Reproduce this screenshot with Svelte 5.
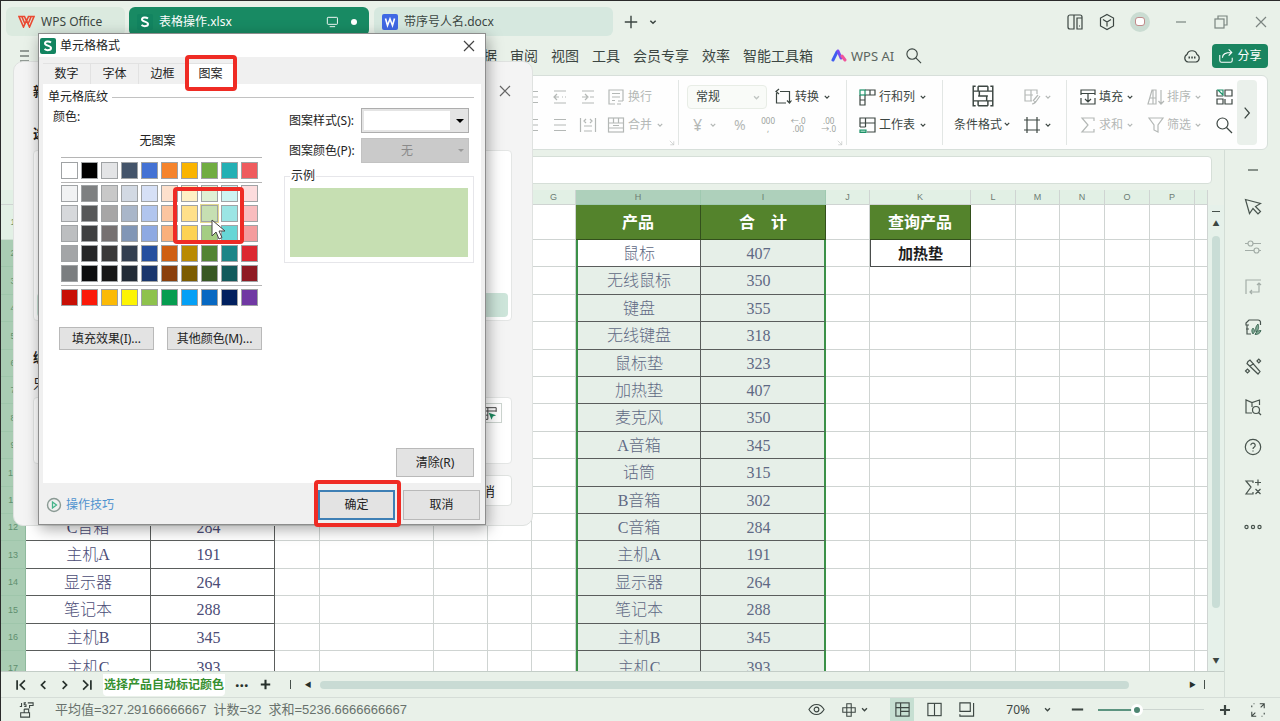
<script lang="ts">
	type Product = { name: string; total: number };

	const products: Product[] = [
		{ name: '鼠标', total: 407 },
		{ name: '无线鼠标', total: 350 },
		{ name: '键盘', total: 355 },
		{ name: '无线键盘', total: 318 },
		{ name: '鼠标垫', total: 323 },
		{ name: '加热垫', total: 407 },
		{ name: '麦克风', total: 350 },
		{ name: 'A音箱', total: 345 },
		{ name: '话筒', total: 315 },
		{ name: 'B音箱', total: 302 },
		{ name: 'C音箱', total: 284 },
		{ name: '主机A', total: 191 },
		{ name: '显示器', total: 264 },
		{ name: '笔记本', total: 288 },
		{ name: '主机B', total: 345 },
		{ name: '主机C', total: 393 }
	];

	const columns = 'ABCDEFGHIJKLMNOP'.split('');
	const columnWidths = [125, 124, 45, 114, 54, 44, 44, 125, 125, 44, 101, 45, 44, 45, 45, 45];

	const menus = ['文件', '开始', '插入', '页面', '公式', '数据', '审阅', '视图', '工具', '会员专享', '效率', '智能工具箱'];
	const dialogTabs = ['数字', '字体', '边框', '图案'];

	const themeColors = ['#ffffff', '#000000', '#e3e4e6', '#44546a', '#4472d4', '#f5842c', '#fab400', '#70ad41', '#23b0b4', '#ef5b5e'];
	const shades = [
		['#f1f2f3', '#7e8081', '#c8c8c8', '#d2d9e3', '#d6e0f6', '#fde0cc', '#fff0c4', '#dff0d4', '#cdf3f2', '#fcdcdd'],
		['#d6d8db', '#575859', '#a7a6a6', '#a9b6c9', '#b1c5ee', '#fbc5a0', '#ffe08a', '#c6dfb2', '#9be5e4', '#f9bcbe'],
		['#bcbec0', '#3f4041', '#767171', '#8196b6', '#8ea9e2', '#f9b07c', '#fdd253', '#a4cd83', '#67d6d6', '#f49c9d'],
		['#a3a5a7', '#252627', '#3a3939', '#333f50', '#254f9f', '#cf5f12', '#b98a00', '#528433', '#1b8587', '#dc2831'],
		['#7b7e80', '#0c0d0e', '#171717', '#222b36', '#1a366c', '#8a400d', '#7c5c00', '#385823', '#125a5b', '#8f1b23']
	];
	const standardColors = ['#c81006', '#fb1a0a', '#fbba06', '#fdf403', '#8ec24c', '#069d50', '#04a0f6', '#0768c2', '#01205f', '#7039a3'];

	const icons: Record<string, string> = {
		menu: '<path d="M4 4h9M4 9h9M4 14h9"/>',
		monitor: '<rect x="3" y="3" width="13" height="9" rx="1"/><path d="M6 15h7"/>',
		plus: '<path d="M9 2v14M2 9h14" stroke-width="1.600"/>',
		bigplus: '<path d="M9 4v10M4 9h10" stroke-width="2.2"/>',
		bigminus: '<path d="M3 9h12" stroke-width="2.2"/>',
		close: '<path d="M4 4l10 10M14 4L4 14"/>',
		split: '<path d="M8 2H4a2 2 0 0 0-2 2v10a2 2 0 0 0 2 2h4zM8 2h6a2 2 0 0 1 2 2v12h-5V5h5M13 13h1"/>',
		cube: '<path d="M9 1.500l6.500 3.500v8L9 16.500 2.500 13V5zM5 6.500L9 9l4-2.500M9 9v4.500"/>',
		minimize: '<path d="M4 9h10"/>',
		restore: '<rect x="3" y="6" width="9" height="9"/><path d="M6 6V3h9v9h-3"/>',
		search: '<circle cx="7.500" cy="7.500" r="5.500"/><path d="M11.500 11.500L17 17"/>',
		cloud: '<path d="M5 15a4 4 0 0 1-1-7.500 5.200 5.200 0 0 1 10 0A4 4 0 0 1 13 15z"/><path d="M5.500 10.500h1.500M8.300 10.500h1.500M11 10.500h1.500" stroke-width="1.800"/>',
		share: '<path d="M2 8v6a2 2 0 0 0 2 2h10a2 2 0 0 0 2-2v-3M5 11c0-4 3-6 10-6M12 1.500L15.500 5 12 8.500"/>',
		outdent: '<path d="M3 3h12M3 15h12M3 9h5M11 9h1M14 9h1M6 6L3 9l3 3"/>',
		indent: '<path d="M3 3h12M3 15h12M3 9h5M11 9h4M6 6l3 3-3 3"/>',
		lines: '<path d="M3 3.500h12M3 9h12M3 14.500h12"/>',
		distribute: '<path d="M1.500 2v14M16.500 2v14M5 10h8M5 15h8M7 3L5 5l2 2M11 3l2 2-2 2"/>',
		wrap: '<path d="M16 13V2H2v14h6M5 5.500h8M5 9h8M5 12.500h3M16 13h-5M10 16h4"/>',
		merge: '<rect x="1.500" y="2" width="15" height="14"/><path d="M1.500 7h15M6.500 2v5M11.500 2v5M1.500 12h15M6 9.500h6"/>',
		convert: '<path d="M6 3.500h9.500v11M12 15H2.500V3.500M5 1L2 3.500 5 6M13 12.500l2.500 2.500 2-2.500"/>',
		rowcol: '<path d="M2 7v10h5V7M2 12h5M7 2h10v5H7M12 2v5"/><rect x="2" y="2" width="5" height="5" stroke="#1c9068"/>',
		worksheet: '<path d="M2 11V2h15v14H9M2 7h15M7.500 2v9M2 11h5.500"/><path d="M2 14h6v2.500H2z" stroke="#1c9068" fill="#8fd0b5"/>',
		condition: '<path d="M3 1H1v16h2M15 1h2v16h-2M1 5h16M1 13h16M5 9h8M5 1h8M5 17h8M5 1v4M13 1v4M6 5v4M12 9v4M5 13v4M13 13v4"/>',
		brush: '<path d="M9 13H2V2h12v4M2 7h8M8 2v11M10 13l5-6M12 15l5-7M9 16c2 0 3-1 3-3"/>',
		frame: '<path d="M4 1v16M14 1v16M1 4h16M1 14h16"/>',
		fill: '<path d="M2 7V2h14v5M2 10v6h14v-6M2 5.500h14M9 6v8M6 11l3 3 3-3"/>',
		sort: '<path d="M1 16l4-14h4v14zM3 10h6M6 2v14M14 2v14M11.500 13l2.500 3 3-3"/>',
		sigma: '<path d="M15 5V2H3l6 7-6 7h12v-3"/>',
		filter: '<path d="M2 2h14l-5 7v7l-4-2V9z"/>',
		freeze: '<path d="M8 8H2V2M10 2h7v6h-7zM8 11H2v5h6zM10 11v5h7v-5"/><path d="M3 2l5 5V2z" stroke="#1c9068"/>',
		cursor: '<path d="M1.500 1.500l4 14 3.500-5 5 5.500 2.500-2.500-5-5 5-3z"/>',
		sliders: '<path d="M1 5.500h3M9 5.500h8M1 12.500h9M15 12.500h2"/><circle cx="6.500" cy="5.500" r="2.500"/><circle cx="12.500" cy="12.500" r="2.500"/>',
		crop: '<path d="M2 16V2h15M6 14h9V5M13 7l2-2 2 2M8 12l-2 2 2 2"/>',
		plant: '<path d="M16.500 7V5a2.500 2.500 0 0 0-2.500-3H5L2 5v2h3M3 7v9h4M2 11h3"/><path d="M9 16c-2-3-1-5 0-6 2 2 2 4 0 6zM12 14c-1-4 0-6 2-8 1 3 1 6-2 8zM11 16.500c1-3 3-4 6-4-1 3-3 4-6 4z" fill="#7fa893" stroke="#2e5c48" stroke-width=".8"/>',
		wand: '<path d="M4 3.500l2-1.500L16 13.500l-2 2.500L3 5.500zM6 8l4-2.500M13 3l1.800-1.800L16.600 3l-1.800 1.800zM1.500 13l2-2 2 2-2 2z"/>',
		book: '<path d="M8 15H2V2l6 2.500L15.500 2v5M8 4.500V9"/><circle cx="12" cy="12" r="3.500"/><path d="M14.500 14.500L17 17"/>',
		help: '<circle cx="9" cy="9" r="7.700"/><path d="M6.800 7.300a2.200 2.200 0 1 1 3.500 1.800C9.300 9.700 9 10 9 11M9 12.500v1"/>',
		formula: '<path d="M9 5V3H2l5 6-5 7h7v-2M14 1.500v6M11 4.500h6M11.500 11l5 5M16.500 11l-5 5"/>',
		more: '<circle cx="2.500" cy="9" r="1.600"/><circle cx="9" cy="9" r="1.600"/><circle cx="15.500" cy="9" r="1.600"/>',
		first: '<path d="M4 3v12M14 3L8 9l6 6" stroke-width="2.200"/>',
		prev: '<path d="M12 4L7 9l5 5" stroke-width="2.200"/>',
		next: '<path d="M6 4l5 5-5 5" stroke-width="2.200"/>',
		last: '<path d="M14 3v12M4 3l6 6-6 6" stroke-width="2.200"/>',
		script: '<path d="M4 1v4H2M9 1H7v2h2v2H7M11 1h6v3h-4v3M7 8v4M3 12h10v5H3zM7 8h5v4"/>',
		eye: '<path d="M1 9c4-7 12-7 16 0-4 7-12 7-16 0z"/><circle cx="9" cy="9" r="2.500"/>',
		cross: '<path d="M6.500 2h5v14h-5zM2 6.500h14v5H2z"/>',
		normal: '<rect x="2" y="2" width="14" height="14"/><path d="M2 7h14M7 2v14M7 11h9"/>',
		page: '<rect x="2" y="2.500" width="14" height="13"/><path d="M9 2.500v13"/>',
		layout: '<path d="M16.500 2v14H2v-2M2 2h11v9H2zM2 16h14"/>',
		full: '<path d="M11 2h5v5M16 2l-4 4M7 16H2v-5M2 16l4-4M2 6V4M5 2H4M16 12v2M13 16h1"/>',
		down: '<path d="M5 7l4 4 4-4" stroke-width="2.200"/>',
		right: '<path d="M6 2l6 7-6 7" stroke-width="1.600"/>',
		pick: '<path d="M17 7V2H2v14h5M2 6h15M7 2v14M2 11h5"/><path d="M8 8l9 3-4 1.500-1.500 4z" fill="#1c8a60" stroke="none"/>',
		corner: '<path d="M4 4l9 9M13 5v8H5"/>'
	};

	const sideTools = ['minimize', 'cursor', 'sliders', 'crop', 'plant', 'wand', 'book', 'help', 'formula', 'more'];
	const fadedTools = ['sliders', 'crop'];

	let activeTab = $state('图案');
	let picked = $state('#c6dfb2');
	let zoom = $state(35);
</script>

{#snippet icon(name: string, size = 16)}
	<svg class="icon" width={size} height={size} viewBox="0 0 18 18" aria-hidden="true">{@html icons[name]}</svg>
{/snippet}

{#snippet swatches(colors: string[])}
	<div class="swatches">
		{#each colors as color}
			<button class="swatch" class:picked={color === picked} style:background={color} aria-label={color} onclick={() => (picked = color)}></button>
		{/each}
	</div>
{/snippet}

{#snippet sheetLogo()}
	<svg width="16" height="16" viewBox="0 0 16 16" aria-hidden="true">
		<rect width="16" height="16" rx="2" fill="#128460" />
		<path d="M11 4.500C9 3 5 3.200 5 5.500s6 2 6 4.500-4 2.800-6.500 1" fill="none" stroke="#fff" stroke-width="2" />
	</svg>
{/snippet}

<div class="app">
	<header class="titlebar">
		<button class="file-tab home">
			<svg width="17" height="13" viewBox="0 0 17 13" aria-hidden="true">
				<path d="M1 1.500h5.500L8.500 6l2-4.500H16L11.500 12 8.500 5.500 5.500 12z M4 2l3 7M13 2l-3 7" fill="none" stroke="#ea4a32" stroke-width="1.600" />
			</svg>
			WPS Office
		</button>
		<button class="file-tab current">
			{@render sheetLogo()}
			<span class="file-name">表格操作.xlsx</span>
			{@render icon('monitor', 14)}
			<span class="unsaved"></span>
		</button>
		<button class="file-tab doc">
			<svg width="16" height="16" viewBox="0 0 16 16" aria-hidden="true">
				<rect width="16" height="16" rx="2" fill="#3f68e4" />
				<path d="M3.500 4.500L5.500 11.500 8 5l2.500 6.500 2-7" fill="none" stroke="#fff" stroke-width="1.600" />
			</svg>
			<span>带序号人名.docx</span>
		</button>
		<button class="plain add" aria-label="新建标签">{@render icon('plus', 16)}</button>
		<button class="plain" aria-label="标签列表">{@render icon('down', 12)}</button>
		<div class="window-tools">
			<button class="plain" aria-label="分屏">{@render icon('split', 18)}</button>
			<button class="plain" aria-label="应用">{@render icon('cube', 18)}</button>
			<span class="avatar"><span></span></span>
			<button class="plain thin" aria-label="最小化">{@render icon('minimize', 18)}</button>
			<button class="plain thin" aria-label="还原">{@render icon('restore', 18)}</button>
			<button class="plain thin" aria-label="关闭">{@render icon('close', 18)}</button>
		</div>
	</header>

	<nav class="menubar">
		<button class="plain" aria-label="菜单">{@render icon('menu', 18)}</button>
		<div class="menus">
			{#each menus as menu}
				<button class="plain">{menu}</button>
			{/each}
		</div>
		<button class="plain ai">
			<svg width="16" height="14" viewBox="0 0 16 14" aria-hidden="true">
				<path d="M2 11L6 3" stroke="#3f5df0" stroke-width="3" stroke-linecap="round" />
				<path d="M7 2l3 7" stroke="#7a4cf0" stroke-width="3" stroke-linecap="round" />
				<path d="M11 7l3 4" stroke="#f0569c" stroke-width="3" stroke-linecap="round" />
			</svg>
			WPS AI
		</button>
		<button class="plain" aria-label="搜索">{@render icon('search', 17)}</button>
		<div class="menu-right">
			<button class="plain" aria-label="云文档">{@render icon('cloud', 18)}</button>
			<button class="share">{@render icon('share', 16)}分享</button>
		</div>
	</nav>

	<section class="ribbon">
		<div class="group align faded">
			<div class="tools">
				{@render icon('lines', 18)}{@render icon('outdent', 18)}{@render icon('indent', 18)}
				<button class="plain wide">{@render icon('wrap', 18)}换行</button>
			</div>
			<div class="tools">
				{@render icon('lines', 18)}{@render icon('lines', 18)}{@render icon('distribute', 18)}
				<button class="plain wide">{@render icon('merge', 18)}合并{@render icon('down', 10)}</button>
			</div>
			<span class="launcher">{@render icon('corner', 8)}</span>
		</div>
		<div class="group number">
			<div class="tools">
				<select class="format" aria-label="数字格式"><option>常规</option></select>
				<span class="format-arrow">{@render icon('down', 11)}</span>
				<button class="plain">{@render icon('convert', 18)}转换{@render icon('down', 10)}</button>
			</div>
			<div class="tools faded signs">
				<button class="plain yen">¥{@render icon('down', 10)}</button>
				<button class="plain">%</button>
				<button class="plain tiny">000<br />,</button>
				<button class="plain tiny">←.0<br />.00</button>
				<button class="plain tiny">.00<br />→.0</button>
			</div>
			<span class="launcher">{@render icon('corner', 8)}</span>
		</div>
		<div class="group sheet-group">
			<div class="tools"><button class="plain">{@render icon('rowcol', 18)}行和列{@render icon('down', 10)}</button></div>
			<div class="tools"><button class="plain">{@render icon('worksheet', 18)}工作表{@render icon('down', 10)}</button></div>
		</div>
		<div class="group format-group">
			<button class="plain stacked">
				{@render icon('condition', 22)}
				<span>条件格式{@render icon('down', 10)}</span>
			</button>
			<div class="pair">
				<div class="tools faded"><button class="plain">{@render icon('brush', 18)}{@render icon('down', 10)}</button></div>
				<div class="tools"><button class="plain">{@render icon('frame', 18)}{@render icon('down', 10)}</button></div>
			</div>
		</div>
		<div class="group edit">
			<div class="tools">
				<button class="plain">{@render icon('fill', 18)}填充{@render icon('down', 10)}</button>
				<button class="plain faded">{@render icon('sort', 18)}排序{@render icon('down', 10)}</button>
				<button class="plain" aria-label="冻结">{@render icon('freeze', 18)}</button>
			</div>
			<div class="tools">
				<button class="plain faded">{@render icon('sigma', 18)}求和{@render icon('down', 10)}</button>
				<button class="plain faded">{@render icon('filter', 18)}筛选{@render icon('down', 10)}</button>
				<button class="plain" aria-label="查找">{@render icon('search', 18)}</button>
			</div>
		</div>
		<button class="plain expand" aria-label="更多">{@render icon('right', 14)}</button>
	</section>

	<div class="workspace">
		<main class="book">
			<input class="formula-bar" aria-label="编辑栏" />
			<div class="grid-row">
				<div class="grid">
					<table>
						<colgroup>
							<col style:width="25px" />
							{#each columnWidths as width}
								<col style:width="{width}px" />
							{/each}
							<col />
						</colgroup>
						<thead>
							<tr>
								<th></th>
								{#each columns as letter}
									<th class:selected={letter === 'H' || letter === 'I'}>{letter}</th>
								{/each}
								<th></th>
							</tr>
						</thead>
						<tbody>
							<tr class="titles">
								<th>1</th>
								<td class="title">产品</td>
								<td class="title">合&emsp;计</td>
								{#each 'CDEFG' as _}<td></td>{/each}
								<td class="title">产品</td>
								<td class="title">合&emsp;计</td>
								<td></td>
								<td class="title">查询产品</td>
								{#each 'LMNOP ' as _}<td></td>{/each}
							</tr>
							{#each products as product, i}
								<tr>
									<th>{i + 2}</th>
									<td class="data">{product.name}</td>
									<td class="data amount">{product.total}</td>
									{#each 'CDEFG' as _}<td></td>{/each}
									<td class="data name" class:tinted={i > 0}>{product.name}</td>
									<td class="data amount total tinted">{product.total}</td>
									<td></td>
									<td class:query={i === 0}>{i === 0 ? '加热垫' : ''}</td>
									{#each 'LMNOP ' as _}<td></td>{/each}
								</tr>
							{/each}
						</tbody>
					</table>
				</div>
				<div class="vscroll">
					<span class="dash"></span>
					<span class="arrow">▲</span>
					<span class="thumb"></span>
					<span class="arrow bottom">▼</span>
				</div>
			</div>
			<div class="sheet-tabs">
				{#each ['first', 'prev', 'next', 'last'] as step}
					<button class="plain" aria-label={step}>{@render icon(step, 14)}</button>
				{/each}
				<button class="sheet-tab">选择产品自动标记颜色</button>
				<button class="plain dots">···</button>
				<button class="plain" aria-label="新建工作表">{@render icon('bigplus', 17)}</button>
				<span class="bar"></span>
				<span class="arrow">◀</span>
				<div class="hscroll"><span></span></div>
				<span class="arrow">▶</span>
				<span class="bar"></span>
			</div>
		</main>
		<aside class="side">
			{#each sideTools as tool}
				<button class="plain" class:pale={fadedTools.includes(tool)} aria-label={tool}>{@render icon(tool, 18)}</button>
			{/each}
		</aside>
	</div>

	<footer class="status">
		{@render icon('script', 16)}
		<div class="summary">
			<span>平均值=327.29166666667</span>
			<span>计数=32</span>
			<span>求和=5236.6666666667</span>
		</div>
		<div class="views">
			<button class="plain" aria-label="护眼模式">{@render icon('eye', 17)}</button>
			<button class="plain reading" aria-label="阅读模式">{@render icon('cross', 16)}{@render icon('down', 11)}</button>
			<button class="plain view active" aria-label="普通视图">{@render icon('normal', 17)}</button>
			<button class="plain view" aria-label="分页预览">{@render icon('page', 17)}</button>
			<button class="plain view" aria-label="页面布局">{@render icon('layout', 17)}</button>
			<button class="plain percent">70%{@render icon('down', 11)}</button>
			<button class="plain" aria-label="缩小">{@render icon('bigminus', 17)}</button>
			<input class="zoom" type="range" min="0" max="100" bind:value={zoom} aria-label="缩放" />
			<button class="plain" aria-label="放大">{@render icon('bigplus', 18)}</button>
			<button class="plain" aria-label="全屏">{@render icon('full', 16)}</button>
		</div>
	</footer>

	<section class="rule-window">
		<div class="rule-title">
			<strong>新建格式规则</strong>
			<button class="plain" aria-label="关闭">{@render icon('close', 18)}</button>
		</div>
		<strong class="rule-label">选择规则类型(S):</strong>
		<div class="rule-types"><span></span></div>
		<strong class="rule-label second">编辑规则说明(E):</strong>
		<span class="rule-text">只为满足以下条件的单元格设置格式</span>
		<div class="rule-formula"><button class="picker" aria-label="选取区域">{@render icon('pick', 15)}</button></div>
		<button class="rule-cancel">取消</button>
	</section>

	<section class="dialog">
		<div class="dialog-title">
			{@render sheetLogo()}
			<span>单元格格式</span>
			<button class="plain" aria-label="关闭">{@render icon('close', 18)}</button>
		</div>
		<div class="dialog-tabs">
			{#each dialogTabs as tab}
				<button class="dialog-tab" class:active={tab === activeTab} onclick={() => (activeTab = tab)}>{tab}</button>
			{/each}
		</div>
		<div class="dialog-page">
			<div class="legend"><span>单元格底纹</span></div>
			<div class="halves">
				<div class="palette">
					<span class="caption">颜色:</span>
					<button class="plain none">无图案</button>
					<div class="palette-grid">
						{@render swatches(themeColors)}
						<div class="shades">
							{#each shades as row}
								{@render swatches(row)}
							{/each}
							<span class="mark"></span>
							<svg class="pointer" width="15" height="21" viewBox="0 0 15 21" aria-hidden="true">
								<path d="M1 1v16l4-4 3 7 3-1.500-3-6.500h6z" fill="#fff" stroke="#444" />
							</svg>
						</div>
						{@render swatches(standardColors)}
					</div>
					<div class="palette-buttons">
						<button class="push">填充效果(I)...</button>
						<button class="push">其他颜色(M)...</button>
					</div>
				</div>
				<div class="pattern">
					<div class="field">
						<label for="style">图案样式(S):</label>
						<div class="combo">
							<select id="style"><option></option></select>
							<svg width="8" height="4" viewBox="0 0 8 4" aria-hidden="true"><path d="M0 0h8L4 4z" /></svg>
						</div>
					</div>
					<div class="field">
						<label for="color">图案颜色(P):</label>
						<div class="combo disabled">
							<select id="color" disabled><option>无</option></select>
							<svg width="6" height="3" viewBox="0 0 8 4" aria-hidden="true"><path d="M0 0h8L4 4z" /></svg>
						</div>
					</div>
					<fieldset>
						<legend>示例</legend>
						<div class="sample" style:background={picked}></div>
					</fieldset>
				</div>
			</div>
			<button class="push clear">清除(R)</button>
		</div>
		<div class="dialog-footer">
			<a href="#tips">
				<svg width="16" height="16" viewBox="0 0 16 16" aria-hidden="true">
					<circle cx="8" cy="8" r="6.500" fill="none" stroke="#8a9a94" stroke-width="1.400" />
					<path d="M6.500 5v6l4-3z" fill="none" stroke="#46b48b" stroke-width="1.300" />
				</svg>
				操作技巧
			</a>
			<button class="push ok">确定</button>
			<button class="push">取消</button>
		</div>
	</section>
</div>

<style>
	:global(body) {
		margin: 0;
	}

	.app {
		position: relative;
		display: flex;
		flex-direction: column;
		height: 100vh;
		box-sizing: border-box;
		overflow: hidden;
		border-top: 1px solid #2a2a2a;
		border-left: 1px solid #2a2a2a;
		background: #e9f1e9;
		color: #3c4642;
		font-family: 'Noto Sans', 'Noto Sans CJK SC', sans-serif;
		font-size: 12px;
		line-height: 16px;
	}

	.app * {
		box-sizing: border-box;
	}

	button,
	select,
	input {
		margin: 0;
		font: inherit;
		color: inherit;
	}

	.plain {
		display: inline-flex;
		align-items: center;
		gap: 2px;
		padding: 0;
		border: none;
		background: none;
		white-space: nowrap;
	}

	.icon {
		flex: none;
		fill: none;
		stroke: currentColor;
		stroke-width: 1.2;
	}

	.faded {
		color: #b4b8b6;
	}

	/* title bar */
	.titlebar {
		display: flex;
		align-items: center;
		height: 35px;
		padding: 6px 10px 0 5px;
	}

	.file-tab {
		display: flex;
		align-items: center;
		gap: 6px;
		height: 29px;
		padding: 0 12px;
		border: none;
		border-radius: 6px;
		background: #dbeadf;
	}

	.home {
		width: 119px;
		margin-right: 4px;
	}

	.current {
		width: 240px;
		margin-right: 5px;
		padding: 0 12px 0 8px;
		background: #188a63;
		color: #fff;
	}

	.file-name {
		flex: 1;
		text-align: left;
	}

	.unsaved {
		width: 6px;
		height: 6px;
		margin: 0 0 0 6px;
		border-radius: 50%;
		background: #fff;
	}

	.doc {
		width: 239px;
		padding: 0 8px;
		background: #d6e8df;
	}

	.add {
		margin: 0 8px 0 10px;
	}

	.window-tools {
		display: flex;
		align-items: center;
		gap: 14px;
		margin-left: auto;
	}

	.avatar {
		display: flex;
		align-items: center;
		justify-content: center;
		width: 20px;
		height: 20px;
		border-radius: 50%;
		background: #cadcd2;
	}

	.avatar span {
		width: 10px;
		height: 9px;
		border: 1px solid #c08b8b;
		border-radius: 3px;
		background: #fff;
	}

	.thin {
		margin-left: 8px;
		color: #7b8580;
	}

	/* menus */
	.menubar {
		display: flex;
		align-items: center;
		height: 39px;
		padding: 0 12px 0 15px;
		font-size: 14px;
	}

	.menus {
		display: flex;
		gap: 13px;
		margin-left: 230px;
	}

	.ai {
		gap: 4px;
		margin: 0 11px 0 18px;
		color: #5b6560;
		font-size: 13px;
	}

	.menu-right {
		display: flex;
		gap: 11px;
		margin-left: auto;
	}

	.share {
		display: flex;
		align-items: center;
		justify-content: center;
		gap: 3px;
		width: 56px;
		height: 24px;
		padding: 0;
		border: none;
		border-radius: 4px;
		background: #1a8560;
		color: #fff;
		font-size: 12px;
	}

	/* ribbon */
	.ribbon {
		display: flex;
		align-items: stretch;
		height: 75px;
		margin: 0 12px 0 13px;
		padding: 4px 10px 4px 0;
		border: 1px solid #d7dfda;
		border-radius: 6px;
		background: #fefefe;
	}

	.group {
		position: relative;
		display: flex;
		flex: none;
		flex-direction: column;
		gap: 4px;
		padding-top: 5px;
		border-right: 1px solid #e2e6e4;
	}

	.tools {
		display: flex;
		align-items: center;
		height: 24px;
	}

	.launcher {
		position: absolute;
		right: 2px;
		bottom: -2px;
		line-height: 8px;
		color: #b4b8b6;
	}

	.align {
		width: 664px;
		align-items: flex-end;
	}

	.align .tools {
		gap: 10px;
	}

	.wide {
		width: 71px;
		gap: 3px;
	}

	.number {
		width: 168px;
		padding-left: 8px;
	}

	.format {
		width: 80px;
		height: 24px;
		padding: 0 8px;
		appearance: none;
		border: 1px solid #e8ede6;
		border-radius: 4px;
		background: #f9fbf8;
	}

	.format-arrow {
		margin: 0 12px 0 -16px;
		line-height: 8px;
		color: #c0c5c2;
		pointer-events: none;
	}

	.number .plain {
		gap: 3px;
	}

	.signs {
		justify-content: space-between;
		padding: 0 10px 0 6px;
		font-size: 14px;
	}

	.signs .yen {
		font-size: 16px;
		gap: 6px;
	}

	.tiny {
		color: #9a9f9c;
		font-size: 8px;
		line-height: 8px;
	}

	.sheet-group {
		width: 96px;
		padding-left: 11px;
	}

	.sheet-group .plain {
		gap: 3px;
	}

	.format-group {
		flex-direction: row;
		align-items: flex-start;
		width: 124px;
		gap: 11px;
		padding-left: 11px;
	}

	.stacked {
		flex-direction: column;
		gap: 10px;
	}

	.pair {
		display: flex;
		flex-direction: column;
		gap: 4px;
	}

	.edit {
		flex: 1;
		min-width: 0;
		padding-left: 12px;
		border: none;
	}

	.edit .tools {
		gap: 12px;
	}

	.expand {
		justify-content: center;
		width: 20px;
		border-radius: 4px;
		background: #eaf0eb;
	}

	/* workbook */
	.workspace {
		display: flex;
		flex: 1;
		min-height: 0;
	}

	.book {
		display: flex;
		flex: 1;
		flex-direction: column;
		min-width: 0;
		border-right: 1px solid #d3ddd6;
	}

	.formula-bar {
		flex: none;
		height: 28px;
		margin: 6px 12px 6px 13px;
		border: 1px solid #d6dfd8;
		border-radius: 4px;
		background: #fff;
	}

	.grid-row {
		display: flex;
		flex: 1;
		min-height: 0;
		border-bottom: 1px solid #c3cdc7;
	}

	.grid {
		flex: 1;
		min-width: 0;
		overflow: hidden;
	}

	table {
		width: 100%;
		table-layout: fixed;
		border-spacing: 0;
		background: #fff;
	}

	th,
	td {
		padding: 0;
		overflow: hidden;
		border-right: 1px solid #cfd4d2;
		border-bottom: 1px solid #cfd4d2;
		text-align: center;
		white-space: nowrap;
	}

	thead th {
		height: 15px;
		background: #e2f0e5;
		color: #6d7c74;
		font-family: 'Liberation Sans', sans-serif;
		font-size: 9px;
		font-weight: 400;
		line-height: 12px;
	}

	thead .selected {
		border-color: #9fc9b0;
		background: #aed0bb;
	}

	tbody tr {
		height: 27px;
	}

	tbody tr:nth-child(5n + 3),
	tbody tr:nth-child(5n + 5) {
		height: 28px;
	}

	tbody tr.titles {
		height: 35px;
	}

	tbody tr:last-child {
		height: 34px;
	}

	tbody th {
		border-right: 1px solid #8fb99d;
		border-bottom-color: #9fc6ab;
		background: #a9ccb3;
		color: #5f8f6f;
		font-family: 'Liberation Sans', sans-serif;
		font-size: 9px;
		font-weight: 400;
	}

	.titles th {
		border-color: #cfdfd3;
		background: #e2f0e5;
	}

	.title {
		border-color: #33501c;
		background: #54832c;
		color: #fff;
		font-size: 16px;
		font-weight: 700;
	}

	.data {
		padding-top: 1px;
		border-color: #5a5d5c;
		color: #4b4c76;
		font-family: 'Liberation Serif', 'Noto Sans CJK SC', serif;
		font-size: 16px;
		font-weight: 300;
	}

	.amount {
		padding-right: 8px;
	}

	.name {
		border-left: 2px solid #3b9148;
		color: #5f6984;
	}

	.total {
		border-right: 2px solid #3b9148;
		color: #5f6984;
	}

	.tinted {
		background: #e6efe8;
	}

	.query {
		border: 1px solid #4a4d4c;
		border-top: none;
		color: #1d1d1d;
		font-size: 15px;
		font-weight: 700;
	}

	.vscroll {
		display: flex;
		flex-direction: column;
		align-items: center;
		width: 16px;
		margin-top: 15px;
		padding: 6px 0;
		background: #e6f1ea;
	}

	.arrow {
		font-size: 7px;
		line-height: 8px;
	}

	.dash {
		width: 8px;
		height: 1px;
		margin-bottom: 8px;
		background: #46504b;
	}

	.thumb {
		width: 8px;
		height: 82%;
		margin-top: 8px;
		border-radius: 4px;
		background: #c9ddd6;
	}

	.bottom {
		margin-top: auto;
	}

	.sheet-tabs {
		display: flex;
		align-items: center;
		gap: 8px;
		height: 25px;
		padding: 0 19px 0 13px;
		color: #26302b;
	}

	.sheet-tab {
		height: 22px;
		margin: 0 2px 0 1px;
		padding: 0 1px;
		border: none;
		border-radius: 0 0 4px 4px;
		background: #fff;
		color: #36902f;
		font-weight: 700;
		white-space: nowrap;
	}

	.dots {
		font-size: 16px;
		font-weight: 700;
	}

	.bar {
		width: 1px;
		height: 9px;
		margin: 0 6px 0 8px;
		background: #46504b;
	}

	.sheet-tabs .bar:last-child {
		margin: 0;
	}

	.hscroll {
		flex: 1;
	}

	.hscroll span {
		display: block;
		width: 94%;
		height: 8px;
		border-radius: 4px;
		background: #c9dbd4;
	}

	.side {
		display: flex;
		flex-direction: column;
		align-items: center;
		gap: 22px;
		width: 55px;
		padding-top: 14px;
		color: #48544e;
	}

	.side .plain {
		height: 18px;
	}

	.side .plain:first-child {
		height: 12px;
	}

	.side .pale {
		color: #a3ada7;
	}

	/* status bar */
	.status {
		display: flex;
		align-items: center;
		height: 24px;
		padding: 0 14px 0 17px;
		border-top: 1px solid #d5ddd7;
	}

	.summary {
		display: flex;
		gap: 7px;
		margin-left: 21px;
		color: #68716c;
		font-family: 'Liberation Sans', 'Noto Sans CJK SC', sans-serif;
		font-size: 13px;
	}

	.views {
		display: flex;
		align-items: center;
		gap: 16px;
		margin-left: auto;
	}

	.reading {
		margin-right: 4px;
	}

	.view {
		justify-content: center;
		width: 24px;
		height: 23px;
		margin-right: -8px;
	}

	.active.view {
		background: #c6dfd2;
	}

	.percent {
		gap: 12px;
		margin-left: 20px;
	}

	.zoom {
		width: 106px;
		height: 12px;
		margin: 0 -4px;
		appearance: none;
		background: linear-gradient(#5c9480, #5c9480) left center / 35% 2px no-repeat, linear-gradient(#ccd5d0, #ccd5d0) center / 100% 1px no-repeat;
	}

	.zoom::-webkit-slider-thumb {
		width: 12px;
		height: 12px;
		appearance: none;
		border: 3px solid #fff;
		border-radius: 50%;
		background: #4d8672;
	}

	/* rule window behind the dialog */
	.rule-window {
		position: absolute;
		top: 60px;
		left: 12px;
		display: flex;
		flex-direction: column;
		width: 520px;
		padding: 19px 20px 19px 19px;
		border: 1px solid #dfe2e0;
		border-radius: 10px;
		background: #f4f4f4;
		color: #222;
		font-size: 13px;
		line-height: 20px;
	}

	.rule-title {
		display: flex;
		justify-content: space-between;
		height: 20px;
		color: #222;
	}

	.rule-title .plain {
		margin-right: -2px;
		color: #666;
	}

	.rule-label {
		margin-top: 22px;
	}

	.rule-types {
		display: flex;
		align-items: flex-end;
		height: 171px;
		margin-top: 7px;
		padding: 3px;
		border: 1px solid #e4e6e5;
		border-radius: 4px;
		background: #fff;
	}

	.rule-types span {
		flex: 1;
		height: 24px;
		border-radius: 4px;
		background: #cde5da;
	}

	.rule-label.second {
		margin-top: 26px;
	}

	.rule-text {
		margin-top: 6px;
	}

	.rule-formula {
		display: flex;
		justify-content: flex-end;
		align-items: flex-start;
		height: 67px;
		margin-top: 4px;
		padding: 5px 9px;
		border: 1px solid #e4e6e5;
		border-radius: 4px;
		background: #fff;
	}

	.picker {
		display: flex;
		align-items: center;
		height: 20px;
		padding: 0 4px;
		border: 1px solid #ccd4cf;
		background: #fff;
		color: #444;
	}

	.rule-cancel {
		align-self: flex-end;
		width: 60px;
		height: 31px;
		margin-top: 11px;
		padding: 0;
		border: 1px solid #dfe2e0;
		border-radius: 4px;
		background: #fff;
	}

	/* cell format dialog */
	.dialog {
		position: absolute;
		top: 32px;
		left: 37px;
		width: 448px;
		border: 1px solid #8d8d8d;
		background: #f0f0f0;
		box-shadow: 2px 4px 14px rgba(0, 0, 0, 0.35);
		color: #222;
	}

	.dialog-title {
		display: flex;
		align-items: center;
		gap: 4px;
		height: 23px;
		padding: 0 7px 0 1px;
		background: #fff;
	}

	.dialog-title .plain {
		margin-left: auto;
		color: #444;
	}

	.dialog-tabs {
		display: flex;
		padding: 6px 4px 0;
	}

	.dialog-tab {
		position: relative;
		width: 48px;
		height: 21px;
		padding: 0;
		border: 1px solid #e2e2e2;
		border-width: 1px 1px 0 0;
		background: #f0f0f0;
	}

	.dialog-tab.active {
		background: #fff;
	}

	.mark,
	.dialog-tab.active::after,
	.ok::after {
		position: absolute;
		border: 4px solid #ef2b24;
		border-radius: 4px;
		content: '';
	}

	.dialog-tab.active::after {
		inset: -9px -3px -7px -2px;
	}

	.dialog-page {
		height: 399px;
		margin: 0 4px;
		padding: 5px 7px 0 5px;
		background: #fff;
		display: flex;
		flex-direction: column;
	}

	.legend {
		display: flex;
		align-items: center;
		gap: 4px;
	}

	.legend::after {
		flex: 1;
		height: 1px;
		background: #c2c2c2;
		content: '';
	}

	.halves {
		display: flex;
		gap: 22px;
	}

	.palette {
		display: flex;
		flex-direction: column;
		width: 214px;
		padding: 4px 0 0 5px;
	}

	.none {
		align-self: center;
		margin-top: 8px;
	}

	.palette-grid {
		width: 201px;
		margin: 8px 0 0 8px;
		border-top: 1px solid #b5b5b5;
	}

	.swatches {
		display: flex;
		gap: 3px;
		padding: 4px 0 3px;
	}

	.swatch {
		width: 17px;
		height: 17px;
		padding: 0;
		border: 1px solid #a0a3a5;
	}

	.swatch.picked {
		outline: 1px solid #e3d98e;
	}

	.shades {
		position: relative;
		padding: 2px 0 0;
		border: solid #b5b5b5;
		border-width: 1px 0;
	}

	.shades .swatches {
		padding: 0 0 3px;
	}

	.shades + .swatches {
		padding-top: 3px;
	}

	.mark {
		top: 4px;
		left: 112px;
		width: 71px;
		height: 57px;
	}

	.pointer {
		position: absolute;
		top: 36px;
		left: 150px;
	}

	.palette-buttons {
		display: flex;
		gap: 13px;
		margin: 18px 0 0 6px;
	}

	.push {
		width: 95px;
		height: 23px;
		padding: 0;
		border: 1px solid #b9b9b9;
		background: #e3e3e3;
		white-space: nowrap;
	}

	.pattern {
		flex: 1;
		padding-top: 3px;
	}

	.field {
		display: flex;
		align-items: center;
		justify-content: space-between;
		height: 25px;
		margin-bottom: 5px;
		padding: 0 5px;
	}

	.combo {
		position: relative;
		width: 108px;
		height: 25px;
	}

	.combo select {
		width: 100%;
		height: 100%;
		padding: 0 16px 0 0;
		appearance: none;
		border: 1px solid #adadad;
		border-radius: 0;
		background: linear-gradient(#fff, #fff) 2px 2px / 86px 19px no-repeat #e4e4e4;
		text-align: center;
	}

	.combo.disabled select {
		border-color: #c2c2c2;
		background: #cacaca;
		color: #8a8a8a;
		opacity: 1;
	}

	.combo svg {
		position: absolute;
		top: 11px;
		right: 5px;
		pointer-events: none;
	}

	.combo.disabled svg {
		fill: #9a9a9a;
	}

	fieldset {
		margin: 0;
		padding: 4px 5px 5px;
		border: 1px solid #e6e6ea;
	}

	legend {
		padding: 0 1px;
	}

	.sample {
		height: 69px;
	}

	.clear {
		width: 78px;
		height: 29px;
		margin: auto 0 6px auto;
	}

	.dialog-footer {
		display: flex;
		align-items: center;
		gap: 8px;
		height: 41px;
		padding: 2px 5px 0 7px;
	}

	.dialog-footer a {
		display: flex;
		align-items: center;
		gap: 4px;
		margin-right: auto;
		color: #4f93cf;
		text-decoration: none;
	}

	.dialog-footer .push {
		position: relative;
		width: 77px;
		height: 30px;
	}

	.dialog-footer .ok {
		border: 2px solid #3e7fb5;
	}

	.ok::after {
		inset: -12px -8px -9px -6px;
	}
</style>
